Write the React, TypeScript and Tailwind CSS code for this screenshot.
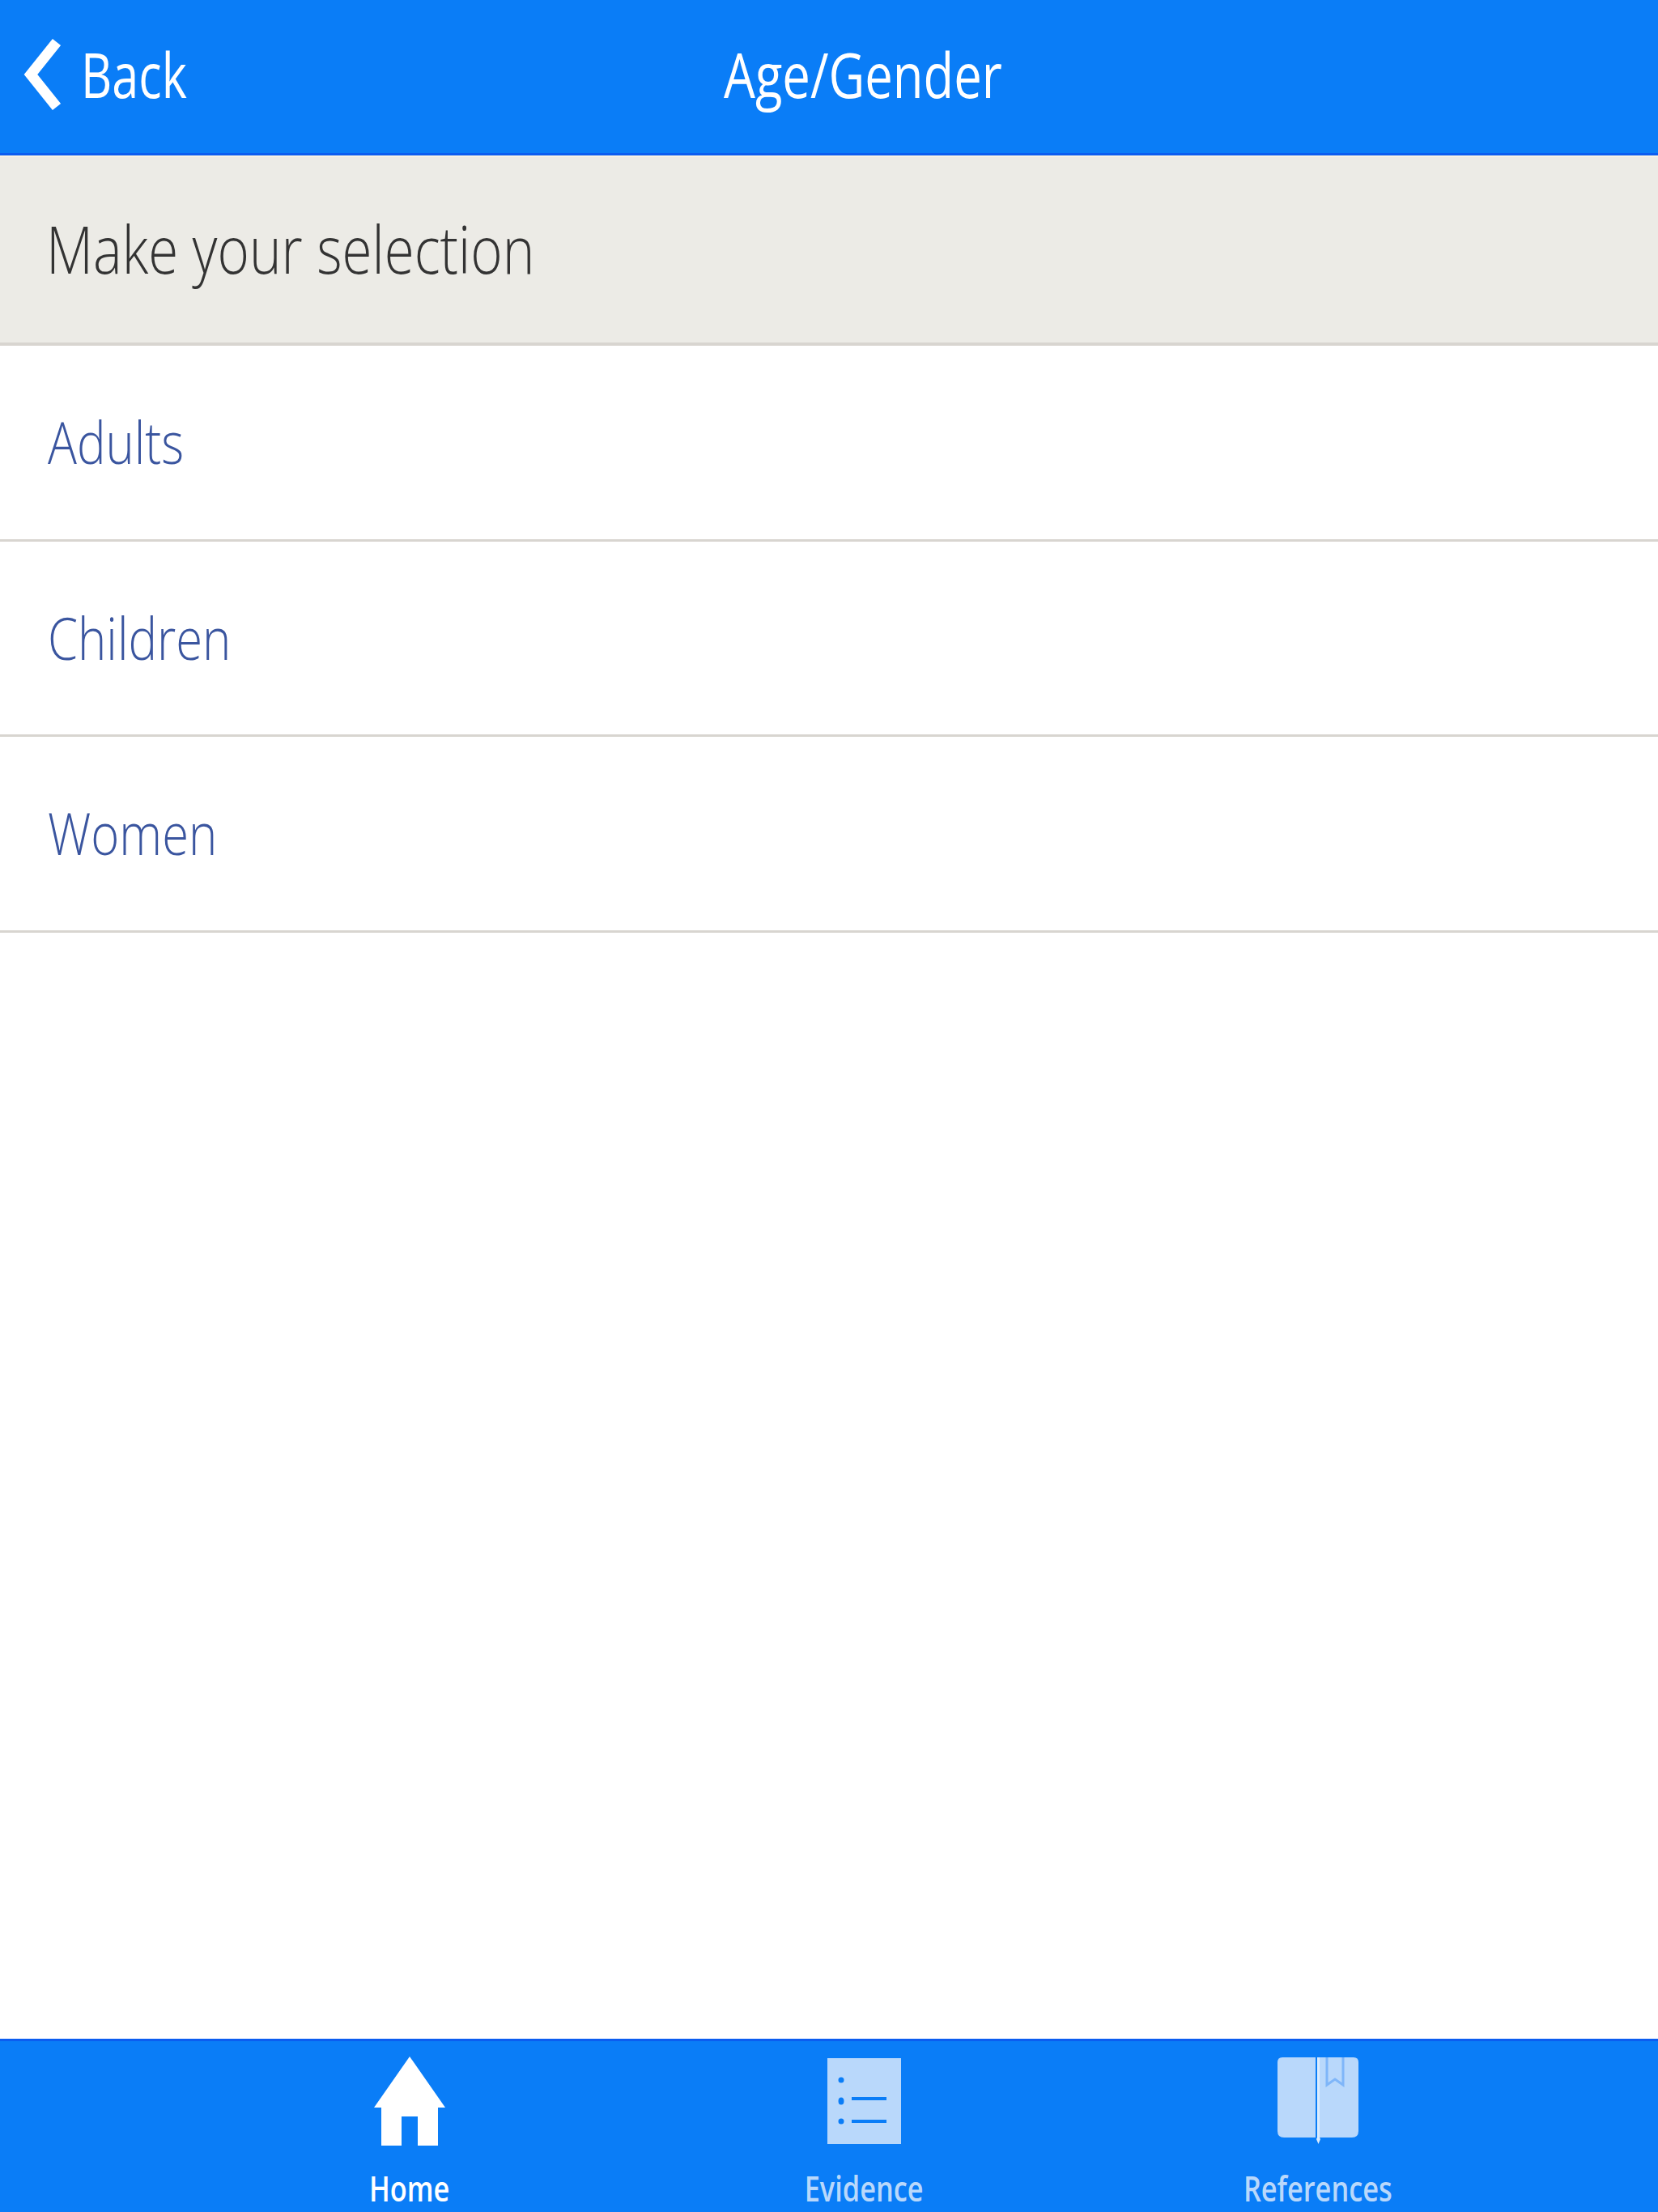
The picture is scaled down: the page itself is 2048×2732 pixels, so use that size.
import { ReactNode } from 'react';

const font = "font-['Open_Sans',sans-serif]";

function HomeIcon() {
  return (
    <svg width="94" height="112" viewBox="0 0 94 112" className="text-white">
      <path fill="currentColor" d="M47 0 91 63H82V110H57V74H37V110H12V63H3Z" />
    </svg>
  );
}

function ListIcon() {
  return (
    <svg width="93" height="112" viewBox="0 0 93 112">
      <path fill="#b9d8fb" d="M1 2H92V108H1Z" />
      <g fill="#0a7df7">
        <circle cx="18" cy="29" r="3.5" />
        <ellipse cx="18" cy="55" rx="3.5" ry="4.5" />
        <rect x="31" y="50" width="43" height="4" />
        <circle cx="18" cy="80" r="3.5" />
        <rect x="31" y="78" width="43" height="4" />
      </g>
    </svg>
  );
}

function BookIcon() {
  return (
    <svg width="100" height="112" viewBox="0 0 100 112">
      <path fill="#b9d8fb" d="M6 1H47V100H8Q0 100 0 92V7Q0 1 6 1Z" />
      <path fill="#b9d8fb" d="M52 1H94Q100 1 100 7V92Q100 100 92 100H52Z" />
      <path fill="#dcecfd" d="M49 1H52V100L53 102 50.5 108 48 102 49 100Z" />
      <path fill="none" stroke="#7fb6f9" strokeWidth="3" d="M61 1V35L71 28 81 35V1" />
    </svg>
  );
}

function TabItem({ icon, label, active }: { icon: ReactNode; label: string; active?: boolean }) {
  return (
    <div className="w-[561px] flex flex-col items-center">
      <div className="h-[112px] flex items-center">{icon}</div>
      <div className={`mt-[26px] text-[44px] leading-[48px] font-semibold whitespace-nowrap scale-x-[.78] ${active ? 'text-white' : 'text-[#b9d8fb]'}`}>
        {label}
      </div>
    </div>
  );
}

export default function App() {
  const rows = ['Adults', 'Children', 'Women'];

  return (
    <div className={`w-[2048px] h-[2732px] bg-white flex flex-col ${font}`}>
      {/* header */}
      <header className="h-[192px] shrink-0 bg-[#0a7df7] border-b-[3px] border-[#0b5df0] flex items-center text-white pb-[6px]">
        <div className="w-[894px] flex items-center pl-[28px]">
          <svg width="50" height="92" viewBox="0 0 50 92">
            <path fill="none" stroke="currentColor" strokeWidth="13" d="M42 6 10 46 42 86" />
          </svg>
          <span className="ml-[22px] text-[76px] leading-none origin-left scale-x-[.78]">Back</span>
        </div>
        <h1 className="text-[76px] leading-none font-normal origin-left scale-x-[.81]">Age/Gender</h1>
      </header>

      {/* selection bar */}
      <div className="h-[235px] shrink-0 bg-[#ecebe6] border-t-[2px] border-t-[#f7f3e6] border-b-[4px] border-b-[#d8d5d0] flex items-center pl-[57px] pb-[6px]">
        <span className="text-[82px] leading-none font-light text-[#333] origin-left scale-x-[.82] whitespace-nowrap">Make your selection</span>
      </div>

      {/* list */}
      <div className="flex-1">
        {rows.map((r) => (
          <div key={r} className="h-[241.5px] border-b-[3px] border-[#d8d5d0] flex items-center pl-[59px] pb-[2px]">
            <span className="text-[72px] leading-none font-light text-[#3a559f] origin-left scale-x-[.83]">{r}</span>
          </div>
        ))}
      </div>

      {/* tabs */}
      <footer className="h-[214px] shrink-0 bg-[#0a7df7] border-t-[3px] border-[#0b5df0] pt-[19px] pl-[86px] flex justify-center">
        <TabItem icon={<HomeIcon />} label="Home" active />
        <TabItem icon={<ListIcon />} label="Evidence" />
        <TabItem icon={<BookIcon />} label="References" />
      </footer>
    </div>
  );
}
